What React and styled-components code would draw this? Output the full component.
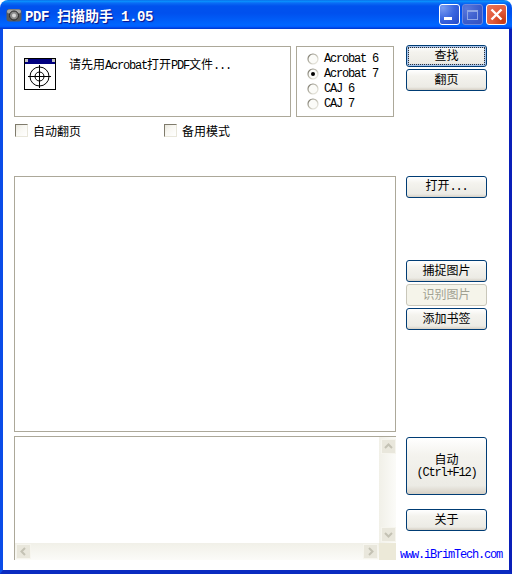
import React from "react";
import styled, { createGlobalStyle } from "styled-components";

const Global = createGlobalStyle`
  html, body { margin: 0; padding: 0; background: #fff; }
`;

const Win = styled.div`
  width: 512px; height: 574px; display: flex; flex-direction: column; overflow: hidden;
  font-family: "Liberation Mono", "Noto Sans CJK SC", monospace; font-size: 12px; letter-spacing: -1.2px; color: #000;
  background: #fff;
`;
const TitleBar = styled.div`
  height: 29px; flex: none; display: flex; align-items: center; padding: 0 5px 0 6px; box-sizing: border-box;
  border-radius: 8px 8px 0 0;
  background: linear-gradient(180deg,#0a5fe0 0,#0997ff 1px,#0a6df5 3px,#0053ee 6px,#0050ee 13px,#0066ff 25px,#005bff 27px,#003dd7 28px,#003dd7 29px);
`;
const Title = styled.div`
  flex: 1; margin-left: 3px; padding-top: 1px; color: #fff; font-weight: bold; font-size: 14px; letter-spacing: -0.4px; white-space: pre;
  text-shadow: 1px 1px 1px #0f1089;
`;
const TitleCjk = styled.span`
  font-family: "Noto Sans CJK SC", sans-serif; font-size: 14px; letter-spacing: 0;
`;
const CtlBtn = styled.div`
  width: 21px; height: 21px; margin-left: ${p => p.$gap}px; box-sizing: border-box; border: 1px solid #fff; border-radius: 3px;
  display: flex; align-items: center; justify-content: center;
  background: ${p => p.$kind === "close"
    ? "radial-gradient(circle at 85% 85%, #c83a12 0, #e2593a 45%, #e8785c 100%)"
    : p.$kind === "max"
      ? "radial-gradient(circle at 20% 20%, #5a78dc 0, #3a5ccc 60%, #3550c0 100%)"
      : "radial-gradient(circle at 15% 15%, #7a9cf0 0, #3a66e0 50%, #2348c8 100%)"};
  border-color: ${p => p.$kind === "max" ? "#6d88dc" : "#fff"};
`;
const Client = styled.div`
  flex: 1; min-height: 0; display: grid; grid-template-columns: 382px 81px; column-gap: 10px; align-content: start;
  padding: 16px 21px 0 11px; background: #fff;
  border-left: 3px solid #0a4ce8; border-right: 3px solid #0a1fb8; border-bottom: 4px solid #0a2bc0;
`;
const Left = styled.div`
  display: flex; flex-direction: column; padding-top: 1px;
`;
const TopRow = styled.div`
  display: flex; gap: 5px; height: 71px;
`;
const InfoBox = styled.div`
  width: 277px; box-sizing: border-box; border: 1px solid #aca899; display: flex; padding: 11px 0 0 9px;
`;
const InfoText = styled.div`
  margin-left: 13px; line-height: 14px; height: 14px; white-space: pre; margin-top: -1px;
`;
const Cjk = styled.span`
  font-family: "Noto Sans CJK SC", sans-serif; font-size: 12px; letter-spacing: 0;
`;
const RadioBox = styled.div`
  width: 98px; box-sizing: border-box; border: 1px solid #aca899; padding: 4px 0 0 10px; display: flex; flex-direction: column;
`;
const RadioRow = styled.div`
  height: 15px; display: flex; align-items: center; gap: 5px; line-height: 15px;
`;
const RadioLabel = styled.span`
  padding-top: 2px;
`;
const OptRow = styled.div`
  display: flex; height: 14px; margin-top: 6px; margin-left: 1px;
`;
const Opt = styled.div`
  display: flex; align-items: center; gap: 5px; width: 149px;
`;
const Check = styled.div`
  width: 13px; height: 13px; box-sizing: border-box; border: 1px solid; border-color: #7f7b6c #e8e6da #e8e6da #7f7b6c;
  background: linear-gradient(135deg,#e8e6dc 0,#f8f7f2 40%,#fff 100%);
`;
const Panel = styled.div`
  height: 256px; margin-top: 39px; box-sizing: border-box; border: 1px solid #aca899; background: #fff;
`;
const TextArea = styled.div`
  height: 124px; margin-top: 4px; box-sizing: border-box; border: 1px solid #aca899; border-right: 0; border-bottom: 0;
  display: grid; grid-template-columns: 1fr 17px; grid-template-rows: 1fr 17px; background: #fff;
`;
const Body = styled.div``;
const VBar = styled.div`
  background: linear-gradient(90deg,#f1f0e8,#fbfbf8); display: flex; flex-direction: column; justify-content: space-between; align-items: center; padding: 2px 0 1px 1px;
`;
const HBar = styled.div`
  background: linear-gradient(180deg,#f1f0e8,#fbfbf8); display: flex; justify-content: space-between; padding: 1px;
`;
const Corner = styled.div`
  background: #ece9d8;
`;
const SBtn = styled.div`
  width: 15px; height: 15px; box-sizing: border-box; border: 1px solid #f6f5ee; background: #e9e7dc; display: flex; align-items: center; justify-content: center;
`;
const Right = styled.div`
  display: flex; flex-direction: column; align-items: stretch;
`;
const Btn = styled.div`
  box-sizing: border-box; height: ${p => p.$h || 22}px; margin-top: ${p => p.$top || 0}px; padding-bottom: ${p => p.$h ? 0 : 2}px;
  border: 1px solid ${p => p.$off ? "#c9c7ba" : "#003c74"}; border-radius: 3px;
  display: flex; flex-direction: column; align-items: center; justify-content: center; line-height: 14px;
  background: ${p => p.$off ? "#f5f4ea" : "linear-gradient(180deg,#fff 0,#f4f3ee 30%,#ecebe5 85%,#d6d0c5 100%)"};
  color: ${p => p.$off ? "#a1a192" : "#000"};
  ${p => p.$focus ? "box-shadow: inset 0 0 0 2px #a9c4ea; outline: 1px dotted #333; outline-offset: -3px;" : ""}
`;
const Url = styled.div`
  margin-top: 17px; margin-left: -6px; color: #0000ff; height: 14px; line-height: 14px; white-space: pre;
`;

const Radio = ({ on }) => (
  <svg width="12" height="12" viewBox="0 0 12 12">
    <defs>
      <linearGradient id="rg" x1="0" y1="0" x2="1" y2="1">
        <stop offset="0" stopColor="#6f6c60" /><stop offset="0.55" stopColor="#c9c7bb" /><stop offset="1" stopColor="#f2f1ea" />
      </linearGradient>
    </defs>
    <circle cx="6" cy="6" r="5" fill="#fbfbf8" stroke="url(#rg)" strokeWidth="1.2" />
    {on && <circle cx="6" cy="6" r="2" fill="#000" />}
  </svg>
);

const AppIcon = () => (
  <svg width="32" height="32" viewBox="0 0 32 32" shapeRendering="crispEdges">
    <rect x="0.5" y="0.5" width="31" height="31" fill="#fff" stroke="#000" />
    <rect x="1" y="1" width="30" height="5" fill="#000080" />
    <rect x="1" y="1" width="3" height="3" fill="#c0c0c0" />
    <rect x="28" y="1" width="3" height="3" fill="#c0c0c0" />
    <g fill="none" stroke="#000" shapeRendering="auto">
      <circle cx="15.5" cy="18.5" r="9.5" />
      <circle cx="15.5" cy="18.5" r="4.5" />
      <path d="M15.5 7v23M4 18.5h23" />
    </g>
  </svg>
);

const GearIcon = () => (
  <svg width="16" height="16" viewBox="0 0 16 16">
    <rect x="0.5" y="2" width="15" height="12.5" rx="3" fill="#5a5a5a" />
    <rect x="1" y="2.5" width="14" height="4" rx="2" fill="#a8a8a8" />
    <circle cx="8" cy="8.5" r="4.5" fill="#8a8a8a" stroke="#262626" />
    <circle cx="8" cy="8.5" r="2" fill="#d8d8d8" />
  </svg>
);

const Chev = ({ d }) => (
  <svg width="9" height="9" viewBox="0 0 9 9">
    <path d={d} fill="none" stroke="#c4c2b4" strokeWidth="2" />
  </svg>
);

export default function App() {
  return (
    <Win>
      <Global />
      <TitleBar>
        <GearIcon />
        <Title>PDF <TitleCjk>扫描助手</TitleCjk> 1.05</Title>
        <CtlBtn $kind="min" $gap={0}>
          <svg width="19" height="19" viewBox="0 0 19 19"><rect x="4" y="12" width="8" height="3" fill="#fff" /></svg>
        </CtlBtn>
        <CtlBtn $kind="max" $gap={2}>
          <svg width="19" height="19" viewBox="0 0 19 19" shapeRendering="crispEdges"><path d="M4.5 5.5h10v9h-10z" fill="none" stroke="#8fa6e6" strokeWidth="1" /><rect x="4" y="5" width="11" height="2" fill="#8fa6e6" /></svg>
        </CtlBtn>
        <CtlBtn $kind="close" $gap={3}>
          <svg width="19" height="19" viewBox="0 0 19 19"><path d="M4.5 4.5l10 10M14.5 4.5l-10 10" stroke="#fff" strokeWidth="2.4" /></svg>
        </CtlBtn>
      </TitleBar>
      <Client>
        <Left>
          <TopRow>
            <InfoBox>
              <AppIcon />
              <InfoText><Cjk>请先用</Cjk>Acrobat<Cjk>打开</Cjk>PDF<Cjk>文件</Cjk>...</InfoText>
            </InfoBox>
            <RadioBox>
              <RadioRow><Radio /><RadioLabel>Acrobat 6</RadioLabel></RadioRow>
              <RadioRow><Radio on /><RadioLabel>Acrobat 7</RadioLabel></RadioRow>
              <RadioRow><Radio /><RadioLabel>CAJ 6</RadioLabel></RadioRow>
              <RadioRow><Radio /><RadioLabel>CAJ 7</RadioLabel></RadioRow>
            </RadioBox>
          </TopRow>
          <OptRow>
            <Opt><Check /><Cjk>自动翻页</Cjk></Opt>
            <Opt><Check /><Cjk>备用模式</Cjk></Opt>
          </OptRow>
          <Panel />
          <TextArea>
            <Body />
            <VBar>
              <SBtn><Chev d="M1 6l3.5-3.5L8 6" /></SBtn>
              <SBtn><Chev d="M1 3l3.5 3.5L8 3" /></SBtn>
            </VBar>
            <HBar>
              <SBtn><Chev d="M6 1L2.5 4.5 6 8" /></SBtn>
              <SBtn><Chev d="M3 1l3.5 3.5L3 8" /></SBtn>
            </HBar>
            <Corner />
          </TextArea>
        </Left>
        <Right>
          <Btn $focus><Cjk>查找</Cjk></Btn>
          <Btn $top={2}><Cjk>翻页</Cjk></Btn>
          <Btn $top={85}><span><Cjk>打开</Cjk>...</span></Btn>
          <Btn $top={62}><Cjk>捕捉图片</Cjk></Btn>
          <Btn $top={2} $off><Cjk>识别图片</Cjk></Btn>
          <Btn $top={2}><Cjk>添加书签</Cjk></Btn>
          <Btn $top={107} $h={58}><Cjk>自动</Cjk><span>(Ctrl+F12)</span></Btn>
          <Btn $top={14}><Cjk>关于</Cjk></Btn>
          <Url>www.iBrimTech.com</Url>
        </Right>
      </Client>
    </Win>
  );
}
